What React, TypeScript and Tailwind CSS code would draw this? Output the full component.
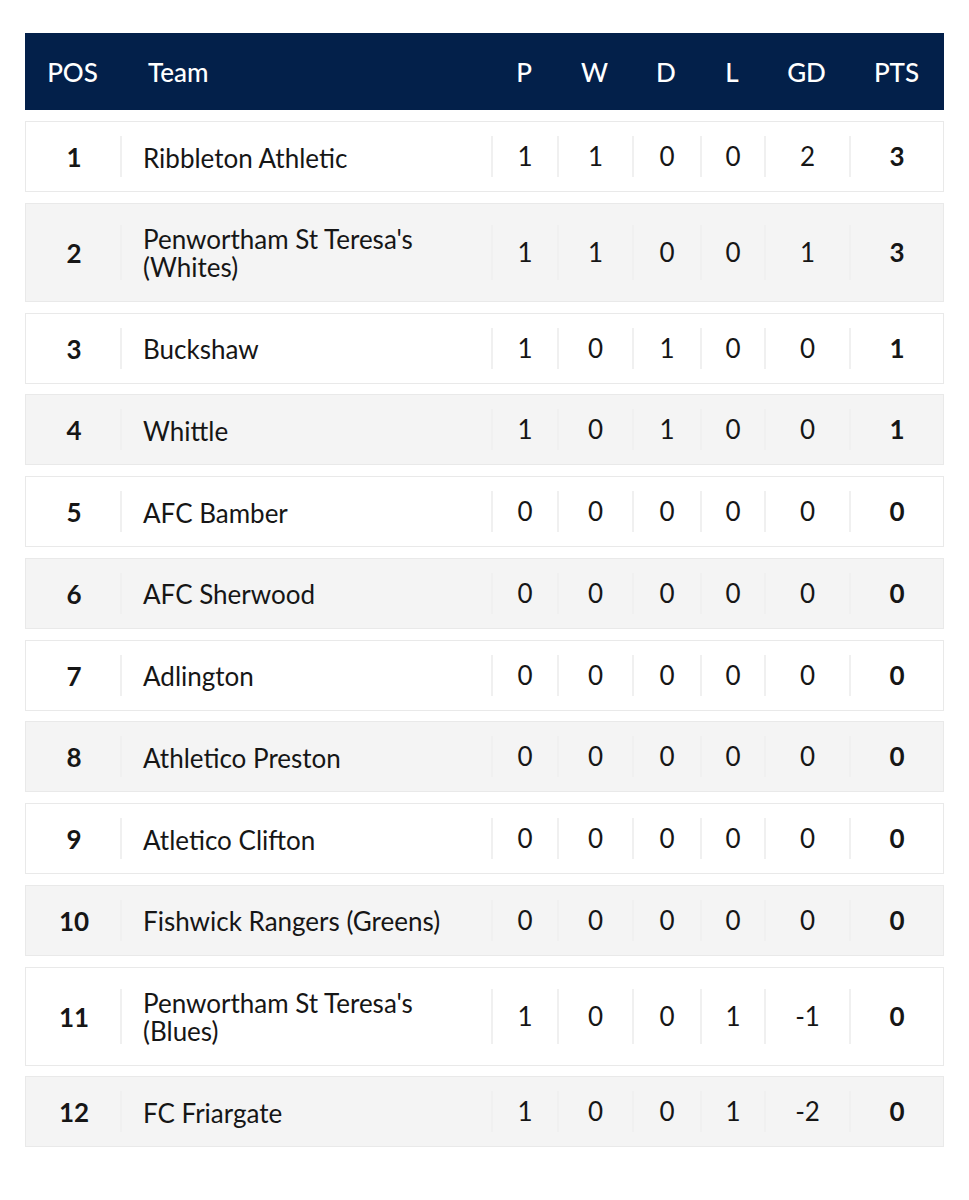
import React from "react";

type Row = {
  pos: number;
  team: string[];
  p: string;
  w: string;
  d: string;
  l: string;
  gd: string;
  pts: string;
};

const rows: Row[] = [
  { pos: 1, team: ["Ribbleton Athletic"], p: "1", w: "1", d: "0", l: "0", gd: "2", pts: "3" },
  { pos: 2, team: ["Penwortham St Teresa's", "(Whites)"], p: "1", w: "1", d: "0", l: "0", gd: "1", pts: "3" },
  { pos: 3, team: ["Buckshaw"], p: "1", w: "0", d: "1", l: "0", gd: "0", pts: "1" },
  { pos: 4, team: ["Whittle"], p: "1", w: "0", d: "1", l: "0", gd: "0", pts: "1" },
  { pos: 5, team: ["AFC Bamber"], p: "0", w: "0", d: "0", l: "0", gd: "0", pts: "0" },
  { pos: 6, team: ["AFC Sherwood"], p: "0", w: "0", d: "0", l: "0", gd: "0", pts: "0" },
  { pos: 7, team: ["Adlington"], p: "0", w: "0", d: "0", l: "0", gd: "0", pts: "0" },
  { pos: 8, team: ["Athletico Preston"], p: "0", w: "0", d: "0", l: "0", gd: "0", pts: "0" },
  { pos: 9, team: ["Atletico Clifton"], p: "0", w: "0", d: "0", l: "0", gd: "0", pts: "0" },
  { pos: 10, team: ["Fishwick Rangers (Greens)"], p: "0", w: "0", d: "0", l: "0", gd: "0", pts: "0" },
  { pos: 11, team: ["Penwortham St Teresa's", "(Blues)"], p: "1", w: "0", d: "0", l: "1", gd: "-1", pts: "0" },
  { pos: 12, team: ["FC Friargate"], p: "1", w: "0", d: "0", l: "1", gd: "-2", pts: "0" },
];

function Cell({
  width,
  tall,
  bold,
  children,
}: {
  width: string;
  tall: boolean;
  bold?: boolean;
  children: React.ReactNode;
}) {
  return (
    <div className={`flex items-center ${width}`}>
      <div className={`w-[2px] bg-[#f0f0f0] ${tall ? "h-[55px]" : "h-[41px]"}`} />
      <div className={`flex-1 text-center ${bold ? "font-bold" : ""}`}>{children}</div>
    </div>
  );
}

export default function App() {
  return (
    <div
      className="min-h-[1200px] w-[969px] bg-white pt-[33px] pl-[25px] text-[#161616]"
      style={{ fontFamily: "Lato, 'Open Sans', sans-serif" }}
    >
      <div className="flex w-[919px] flex-col">
        {/* Header */}
        <div className="flex h-[77px] items-center bg-[#03204a] text-[26px] font-medium text-white">
          <div className="w-[95px] pt-[2px] text-center">POS</div>
          <div className="w-[371px] pl-[28px] pt-[2px]">Team</div>
          <div className="w-[66px] pt-[2px] text-center">P</div>
          <div className="w-[75px] pt-[2px] text-center">W</div>
          <div className="w-[68px] pt-[2px] text-center">D</div>
          <div className="w-[64px] pt-[2px] text-center">L</div>
          <div className="w-[85px] pt-[2px] text-center">GD</div>
          <div className="w-[95px] pt-[2px] text-center">PTS</div>
        </div>

        <div className="mt-[11px] flex flex-col gap-[10.75px]">
          {rows.map((r, i) => {
            const tall = r.team.length > 1;
            return (
              <div
                key={r.pos}
                className={`flex items-center border border-[#e9e9e9] text-[26px] ${
                  tall ? "h-[99px]" : "h-[71px]"
                } ${i % 2 === 0 ? "bg-white" : "bg-[#f4f4f4]"}`}
              >
                <div className="w-[94px] pl-[2px] pt-[2px] text-center font-bold">{r.pos}</div>
                <div className="flex w-[371px] items-center">
                  <div className={`w-[2px] bg-[#f0f0f0] ${tall ? "h-[55px]" : "h-[41px]"}`} />
                  <div className="pl-[21px] pt-[2px] leading-[28px]">
                    {r.team.map((t) => (
                      <div key={t}>{t}</div>
                    ))}
                  </div>
                </div>
                <Cell width="w-[66px]" tall={tall}>{r.p}</Cell>
                <Cell width="w-[75px]" tall={tall}>{r.w}</Cell>
                <Cell width="w-[68px]" tall={tall}>{r.d}</Cell>
                <Cell width="w-[64px]" tall={tall}>{r.l}</Cell>
                <Cell width="w-[85px]" tall={tall}>{r.gd}</Cell>
                <Cell width="w-[94px]" tall={tall} bold>{r.pts}</Cell>
              </div>
            );
          })}
        </div>
      </div>
    </div>
  );
}
